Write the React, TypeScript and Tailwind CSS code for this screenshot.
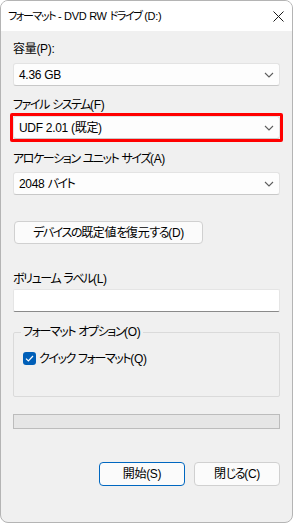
import React from 'react';

const font = { fontFamily: '"Liberation Sans", "Noto Sans CJK JP", sans-serif' };

// katakana / hiragana runs are set tighter, closer to the narrow UI font
function T({ text }: { text: string }) {
  const parts = text.split(/([\u3040-\u30ff]+)/).filter(Boolean);
  return (
    <>
      {parts.map((p, i) =>
        /[\u3040-\u30ff]/.test(p) ? (
          <span key={i} className="tracking-[-1.4px]">{p}</span>
        ) : (
          <span key={i}>{p}</span>
        )
      )}
    </>
  );
}

function Chevron() {
  return (
    <svg width="10" height="6" viewBox="0 0 10 6" className="shrink-0">
      <path d="M1 1 L5 5 L9 1" fill="none" stroke="#5f5f5f" strokeWidth="1.1" />
    </svg>
  );
}

function Combo({ value }: { value: string }) {
  return (
    <div className="h-[23px] flex items-center justify-between pl-[5px] pr-[5px] bg-[#fdfdfd] border border-[#e3e3e3] border-b-[#c8c8c8] rounded-[3px] text-[12px] text-black">
      <span className="leading-none"><T text={value} /></span>
      <Chevron />
    </div>
  );
}

function Label({ text, className }: { text: string; className?: string }) {
  return (
    <div className={`h-[16px] flex items-center text-[12px] text-black leading-none ${className ?? ''}`}>
      <span><T text={text} /></span>
    </div>
  );
}

export default function App() {
  return (
    <div style={font} className="w-[294px] h-[523px] bg-white [font-feature-settings:'palt'] tracking-[-0.3px]">
      <div className="w-[293px] h-[523px] flex flex-col border border-[#b4b4b4] rounded-[8px] overflow-hidden bg-[#f0f0f0]">
        {/* title bar */}
        <div className="h-[30px] bg-white flex items-center justify-between pl-[7px] pr-[8px] shrink-0">
          <span className="text-[11px] text-black leading-none"><T text="フォーマット - DVD RW ドライブ (D:)" /></span>
          <svg width="11" height="11" viewBox="0 0 11 11">
            <path d="M0.5 0.5 L10.5 10.5 M10.5 0.5 L0.5 10.5" stroke="#1a1a1a" strokeWidth="1" />
          </svg>
        </div>

        <div className="flex flex-col px-[12px]">
          <Label text="容量(P):" className="mt-[10px]" />
          <div className="mt-[6px]">
            <Combo value="4.36 GB" />
          </div>

          <Label text="ファイル システム(F)" className="mt-[11px]" />
          <div className="-mx-[3px] border-[3px] border-[#ff0000] rounded-[2px]">
            <Combo value="UDF 2.01 (既定)" />
          </div>

          <Label text="アロケーション ユニット サイズ(A)" className="mt-[9px]" />
          <div className="mt-[5px]">
            <Combo value="2048 バイト" />
          </div>

          <button className="mt-[26px] ml-[1px] w-[189px] h-[23px] flex items-center justify-center bg-[#fbfbfb] border border-[#d0d0d0] rounded-[4px] text-[12px] text-black leading-none">
            <span><T text="デバイスの既定値を復元する(D)" /></span>
          </button>

          <Label text="ボリューム ラベル(L)" className="mt-[27px]" />
          <div className="mt-[2px] h-[23px] bg-white border border-[#e5e5e5] border-b-[#8a8a8a] rounded-[2px]" />

          <fieldset className="mt-[12px] h-[73px] border border-[#dadada] rounded-[2px] px-[9px]">
            <legend className="ml-[-2px] px-[2px] text-[12px] leading-[16px] text-black"><T text="フォーマット オプション(O)" /></legend>
            <div className="mt-[12px] flex items-center gap-[3px]">
              <span className="w-[13px] h-[13px] rounded-[3px] bg-[#005fb8] flex items-center justify-center">
                <svg width="9" height="7" viewBox="0 0 9 7">
                  <path d="M1 3.6 L3.4 6 L8 1" fill="none" stroke="white" strokeWidth="1.2" />
                </svg>
              </span>
              <span className="text-[12px] leading-none text-black"><T text="クイック フォーマット(Q)" /></span>
            </div>
          </fieldset>

          <div className="mt-[17px] h-[15px] bg-[#e6e6e6] border border-[#bcbcbc]" />

          <div className="mt-[33px] flex justify-end gap-[9px]">
            <button className="w-[86px] h-[24px] flex items-center justify-center bg-[#fbfbfb] border border-[#0067c0] rounded-[4px] text-[12px] text-black leading-none">
              開始(S)
            </button>
            <button className="w-[86px] h-[24px] flex items-center justify-center bg-[#fbfbfb] border border-[#d0d0d0] rounded-[4px] text-[12px] text-black leading-none">
              <span><T text="閉じる(C)" /></span>
            </button>
          </div>
        </div>
      </div>
    </div>
  );
}
